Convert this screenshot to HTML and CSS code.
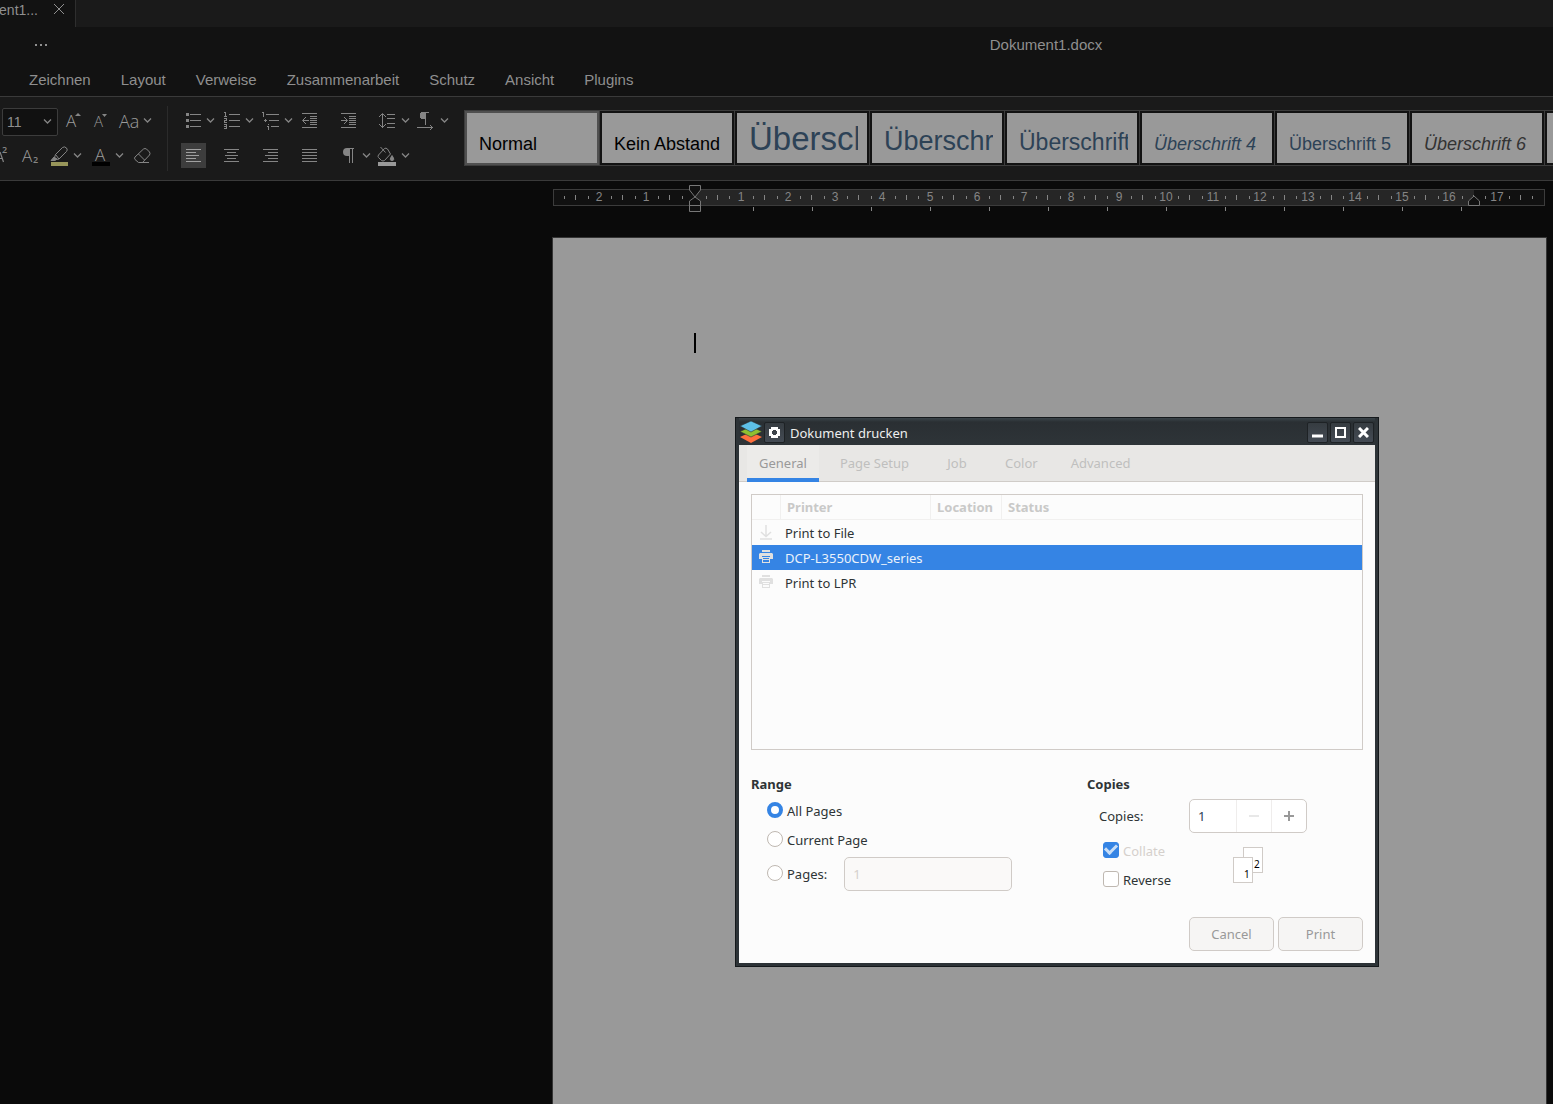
FILE: index.html
```html
<!DOCTYPE html>
<html lang="de">
<head>
<meta charset="utf-8">
<title>Dokument1.docx</title>
<link rel="stylesheet" href="styles.css">
</head>
<body>
<svg class="defs" width="0" height="0" aria-hidden="true">
  <symbol id="chev" viewBox="0 0 14 25"><path d="M1 10.500l3.500 3.500L8 10.500" fill="none" stroke="currentColor" stroke-width="1.300"/></symbol>
  <symbol id="pilcrow" viewBox="0 0 12 16"><path d="M5 0h7v1h-1v14h-1V1H8v14H7V8H5a4 4 0 0 1 0-8z" fill="currentColor"/></symbol>
  <symbol id="printer" viewBox="0 0 14 14"><path fill="currentColor" fill-rule="evenodd" d="M3 0h8v2H3zM1 3h12l1 1v5h-3V6H3v3H0V4zM3 7h8v6H3zM4 8v1h6V8zM4 10v2h6v-2z"/></symbol>
</svg>

<header class="tabbar">
  <div class="doc-tab">
    <span>ent1...</span>
    <button class="icon-btn tab-close" aria-label="Schließen"><svg width="12" height="12" viewBox="0 0 12 12"><path d="M1 1l10 10M11 1L1 11" stroke="currentColor" fill="none"/></svg></button>
  </div>
</header>

<div class="titlebar">
  <button class="icon-btn more" aria-label="Mehr"><svg width="14" height="4" viewBox="0 0 14 4"><path d="M1 1h2v2H1zM6 1h2v2H6zM11 1h2v2h-2z" fill="currentColor"/></svg></button>
  <div class="doc-title">Dokument1.docx</div>
</div>

<nav class="menu">
  <a href="#">Zeichnen</a><a href="#">Layout</a><a href="#">Verweise</a><a href="#">Zusammenarbeit</a><a href="#">Schutz</a><a href="#">Ansicht</a><a href="#">Plugins</a>
</nav>

<div class="toolbar">
  <div class="group font-group">
    <div class="row">
      <div class="size-box">
        <select aria-label="Schriftgrad"><option>11</option></select>
        <svg width="14" height="25"><use href="#chev"/></svg>
      </div>
      <button class="tool wide" aria-label="Schrift vergrößern"><svg width="28" height="25"><text x="7" y="19" font-size="17">A</text><path d="M16 8l3-3 3 3z" fill="currentColor"/></svg></button>
      <button class="tool wide" aria-label="Schrift verkleinern"><svg width="28" height="25"><text x="7" y="19" font-size="15">A</text><path d="M15 6h5l-2.500 3z" fill="currentColor"/></svg></button>
      <button class="tool wide" aria-label="Groß-/Kleinschreibung"><svg width="28" height="25"><text x="4" y="20" font-size="18">Aa</text></svg></button>
      <button class="arrow" aria-label="Optionen"><svg width="14" height="25"><use href="#chev"/></svg></button>
    </div>
    <div class="row">
      <button class="tool" aria-label="Hochgestellt"><svg width="17" height="25"><path d="M0 9l3.500 10M0 15.500h2" fill="none" stroke="currentColor" stroke-width="1.200"/><text class="digit" x="2" y="10" font-size="9">2</text></svg></button>
      <button class="tool wide" aria-label="Tiefgestellt"><svg width="28" height="25"><text x="5" y="19" font-size="17">A</text><text class="digit" x="16" y="20" font-size="9">2</text></svg></button>
      <button class="tool wide" aria-label="Hervorhebung"><svg width="28" height="25" fill="none" stroke="currentColor"><path d="M10.500 11.500l7-7q2-1.500 4 .500 1.500 2 0 3.500l-7.500 7.500zM10.500 11.500l-1 3 2 2 2.500-.500"/><path d="M9 14l-3 3.500h4l2-1.500z" fill="currentColor"/><path d="M6 21h17" stroke="#98965a" stroke-width="4"/></svg></button>
      <button class="arrow" aria-label="Optionen"><svg width="14" height="25"><use href="#chev"/></svg></button>
      <button class="tool wide" aria-label="Schriftfarbe"><svg width="28" height="25"><text x="8" y="18" font-size="17">A</text><path d="M5 21h18" stroke="#000" stroke-width="4"/></svg></button>
      <button class="arrow" aria-label="Optionen"><svg width="14" height="25"><use href="#chev"/></svg></button>
      <button class="tool wide" aria-label="Formatierung löschen"><svg width="28" height="25" fill="none" stroke="currentColor"><path d="M6 14l8.500-8q1.500-1 3 0l3 3q1 1.500 0 3l-7 7.500h-4L6 16.500q-1-1.500 0-2.500zM9.500 11l6 6M10 19.500h10"/></svg></button>
    </div>
  </div>

  <div class="group para-group">
    <div class="row">
      <div class="cell"><button class="tool" aria-label="Aufzählung"><svg width="25" height="25" class="crisp"><path d="M9 6.500h11M9 12.500h11M9 18.500h11"/><path d="M5 6.500h3M5 12.500h3M5 18.500h3" stroke-width="3"/></svg></button><button class="arrow" aria-label="Optionen"><svg width="14" height="25"><use href="#chev"/></svg></button></div>
      <div class="cell"><button class="tool" aria-label="Nummerierung"><svg width="25" height="25" class="crisp"><path d="M9 6.500h11M9 12.500h11M9 18.500h11M4 4.500h2M5.500 4v4M4 8.500h3M4 10.500h3M6.500 10v2M4 12.500h3M4.500 12v2M4 14.500h3M4 16.500h3M6.500 16v5M4 18.500h3M4 20.500h3"/></svg></button><button class="arrow" aria-label="Optionen"><svg width="14" height="25"><use href="#chev"/></svg></button></div>
      <div class="cell"><button class="tool" aria-label="Mehrstufige Liste"><svg width="25" height="25" class="crisp"><path d="M7 6.500h13M10 12.500h10M12 18.500h8M3 4.500h2M4.500 4v5M9.500 16v1M9.500 18v4M8 18.500h1"/><path d="M5 12.500h3M6.500 11v3"/></svg></button><button class="arrow" aria-label="Optionen"><svg width="14" height="25"><use href="#chev"/></svg></button></div>
      <div class="cell"><button class="tool" aria-label="Einzug verkleinern"><svg width="25" height="25" class="crisp"><path d="M4 5.500h15M12 8.500h7M12 10.500h7M12 12.500h7M12 14.500h7M12 16.500h7M4 19.500h15M5 12.500h6"/><path class="smooth" d="M8 9l-3.500 3.500L8 16"/></svg></button></div>
      <div class="cell"><button class="tool" aria-label="Einzug vergrößern"><svg width="25" height="25" class="crisp"><path d="M4 5.500h15M12 8.500h7M12 10.500h7M12 12.500h7M12 14.500h7M12 16.500h7M4 19.500h15M4 12.500h6"/><path class="smooth" d="M7 9l3.500 3.500L7 16"/></svg></button></div>
      <div class="cell"><button class="tool" aria-label="Zeilenabstand"><svg width="25" height="25" class="crisp"><path d="M11 6.500h8M11 10.500h8M11 15.500h8M11 19.500h8M6.500 6v14"/><path class="smooth" d="M3 9l3.500-3.500L10 9M3 16l3.500 3.500L10 16"/></svg></button><button class="arrow" aria-label="Optionen"><svg width="14" height="25"><use href="#chev"/></svg></button></div>
      <div class="cell"><button class="tool" aria-label="Textrichtung"><svg width="25" height="25" class="crisp"><use href="#pilcrow" x="3" y="4" width="12" height="14"/><path d="M2 19.500h16"/><path class="smooth" d="M15 17l2.500 2.500L15 22"/></svg></button><button class="arrow" aria-label="Optionen"><svg width="14" height="25"><use href="#chev"/></svg></button></div>
    </div>
    <div class="row">
      <div class="cell"><button class="tool active" aria-label="Linksbündig"><svg width="25" height="25" class="crisp"><path d="M5 6.500h15M5 9.500h10M5 12.500h13M5 15.500h10M5 18.500h15"/></svg></button></div>
      <div class="cell"><button class="tool" aria-label="Zentriert"><svg width="25" height="25" class="crisp"><path d="M4 6.500h15M7 9.500h9M5 12.500h13M7 15.500h9M4 18.500h15"/></svg></button></div>
      <div class="cell"><button class="tool" aria-label="Rechtsbündig"><svg width="25" height="25" class="crisp"><path d="M4 6.500h15M9 9.500h10M6 12.500h13M9 15.500h10M4 18.500h15"/></svg></button></div>
      <div class="cell"><button class="tool" aria-label="Blocksatz"><svg width="25" height="25" class="crisp"><path d="M4 6.500h15M4 9.500h15M4 12.500h15M4 15.500h15M4 18.500h15"/></svg></button></div>
      <div class="cell"><button class="tool" aria-label="Formatierungszeichen"><svg width="25" height="25"><use href="#pilcrow" x="5" y="5" width="12" height="16"/></svg></button><button class="arrow" aria-label="Optionen"><svg width="14" height="25"><use href="#chev"/></svg></button></div>
      <div class="cell"><button class="tool" aria-label="Schattierung"><svg width="25" height="25" fill="none" stroke="currentColor"><path d="M8.500 5.500L2.500 12q-1 1.500 0 2.500l3 3q1.500 1 3 0l6-6.500-3-5q-1.500-1.500-3-.500zM4.500 4l5 5.500"/><path d="M16 12.500q3.500 5 0 5t0-5z" fill="currentColor"/><path d="M2 21h18" stroke="#999" stroke-width="4"/></svg></button><button class="arrow" aria-label="Optionen"><svg width="14" height="25"><use href="#chev"/></svg></button></div>
    </div>
  </div>

  <div class="gallery">
    <button class="style selected"><span class="clip"><span>Normal</span></span></button>
    <button class="style"><span class="clip"><span>Kein Abstand</span></span></button>
    <button class="style heading"><span class="clip"><span class="h1">Übersch</span></span></button>
    <button class="style heading"><span class="clip"><span class="h2">Überschr</span></span></button>
    <button class="style heading"><span class="clip"><span class="h3">Überschrift</span></span></button>
    <button class="style heading"><span class="clip"><span class="italic">Überschrift 4</span></span></button>
    <button class="style heading"><span class="clip"><span>Überschrift 5</span></span></button>
    <button class="style h6"><span class="clip"><span class="italic">Überschrift 6</span></span></button>
    <button class="style" aria-label="Überschrift 7"><span class="clip"></span></button>
  </div>
</div>

<main class="editor">
  <div class="sheet-column">
    <svg class="ruler" width="995" height="29" viewBox="0 0 995 29" aria-label="Lineal">
      <rect x="1.500" y="5.500" width="991" height="16" fill="#111" stroke="#3c3c3c"/>
      <rect x="143" y="6" width="779" height="15" fill="#262626"/>
      <g stroke="#858585" shape-rendering="crispEdges">
        <line x1="12" x2="984" y1="13.500" y2="13.500" stroke-width="3" stroke-dasharray="1 22.620"/>
        <line x1="23" x2="984" y1="13.500" y2="13.500" stroke-width="5" stroke-dasharray="1 46.240"/>
        <line x1="201" x2="912" y1="25" y2="25" stroke-width="4" stroke-dasharray="1 58.020"/>
      </g>
      <g class="ruler-num">
        <text x="47" y="17">2</text><text x="94" y="17">1</text>
        <text x="189" y="17">1</text><text x="236" y="17">2</text><text x="283" y="17">3</text><text x="330" y="17">4</text><text x="378" y="17">5</text><text x="425" y="17">6</text><text x="472" y="17">7</text><text x="519" y="17">8</text><text x="567" y="17">9</text><text x="614" y="17">10</text><text x="661" y="17">11</text><text x="708" y="17">12</text><text x="756" y="17">13</text><text x="803" y="17">14</text><text x="850" y="17">15</text><text x="897" y="17">16</text><text x="945" y="17">17</text>
      </g>
      <g fill="#111" stroke="#777">
        <path d="M137.500 1.500h11V6l-5.500 7-5.500-7zM137.500 27.500V17l5.500-4 5.500 4v10.500zM137.500 21.500h11"/>
        <path d="M916.500 21.500V17l5.500-5 5.500 5v4.500z"/>
      </g>
    </svg>
    <div class="sheet"><span class="caret"></span></div>
  </div>
</main>

<section class="dialog" role="dialog" aria-labelledby="dlg-title">
  <div class="dlg-bar">
    <svg class="logo" width="24" height="24" viewBox="0 0 24 24"><path d="M1 17l11-5 11 5-11 6z" fill="#ff6f3d"/><path d="M1 11.500l11-5 11 5-11 5.500z" fill="#8fc031" stroke="#2c3135" stroke-width=".6"/><path d="M1 6l11-5 11 5-11 6z" fill="#5dc0e8" stroke="#2c3135" stroke-width=".6"/></svg>
    <button class="win-btn" aria-label="Fenstermenü"><svg width="11" height="11" viewBox="0 0 11 11"><path fill="#fff" fill-rule="evenodd" d="M2 0h7v2h2v7H9v2H2V9H0V2h2zM4 3v1H3v3h1v1h3V7h1V4H7V3z"/></svg></button>
    <h1 id="dlg-title">Dokument drucken</h1>
    <button class="win-btn" aria-label="Minimieren"><svg width="11" height="11"><path d="M0 9h11" stroke="#fff" stroke-width="3"/></svg></button>
    <button class="win-btn" aria-label="Maximieren"><svg width="11" height="11"><path d="M1 1h9v9H1z" fill="none" stroke="#fff" stroke-width="2"/></svg></button>
    <button class="win-btn" aria-label="Schließen"><svg width="11" height="11"><path d="M1 1l9 9M10 1l-9 9" stroke="#fff" stroke-width="3"/></svg></button>
  </div>
  <div class="dlg-content">
    <div class="tabs" role="tablist">
      <button role="tab" class="current">General</button><button role="tab">Page Setup</button><button role="tab" class="short">Job</button><button role="tab">Color</button><button role="tab">Advanced</button>
    </div>
    <div class="dlg-body">
      <div class="list">
        <table>
          <colgroup><col class="c-icon"><col class="c-name"><col class="c-loc"><col></colgroup>
          <thead><tr><th></th><th>Printer</th><th>Location</th><th>Status</th></tr></thead>
          <tbody>
            <tr><td><svg width="14" height="16" viewBox="0 0 14 16"><path d="M7 0v11M2 7l5 4.500L12 7M1 14h12" fill="none" stroke="currentColor" stroke-width="1.500"/></svg></td><td>Print to File</td><td></td><td></td></tr>
            <tr class="picked"><td><svg width="14" height="16"><use href="#printer" width="14" height="14"/></svg></td><td>DCP-L3550CDW_series</td><td></td><td></td></tr>
            <tr><td><svg width="14" height="16"><use href="#printer" width="14" height="14"/></svg></td><td>Print to LPR</td><td></td><td></td></tr>
          </tbody>
        </table>
      </div>
      <div class="options">
        <div class="range">
          <h2>Range</h2>
          <label class="opt"><input type="radio" name="range" checked>All Pages</label>
          <label class="opt"><input type="radio" name="range">Current Page</label>
          <div class="pages"><label class="opt"><input type="radio" name="range">Pages:</label><input type="text" class="entry" value="1" aria-label="Pages" disabled></div>
        </div>
        <div class="copies">
          <h2>Copies</h2>
          <div class="copy-grid">
            <label for="copies">Copies:</label>
            <div class="spin"><input id="copies" type="text" inputmode="numeric" value="1"><button disabled aria-label="Weniger"><svg width="10" height="10"><path d="M0 5h10" stroke="currentColor" stroke-width="2"/></svg></button><button aria-label="Mehr"><svg width="10" height="10"><path d="M0 5h10M5 0v10" stroke="currentColor" stroke-width="2"/></svg></button></div>
            <div class="checks">
              <label class="opt off"><input type="checkbox" checked disabled>Collate</label>
              <label class="opt"><input type="checkbox">Reverse</label>
            </div>
            <svg class="collate" width="30" height="36" viewBox="0 0 30 36"><rect x="10.500" y=".5" width="19" height="25"/><text x="21" y="21">2</text><rect x=".5" y="10.500" width="19" height="25"/><text x="11" y="31">1</text></svg>
          </div>
        </div>
      </div>
      <div class="actions"><button>Cancel</button><button>Print</button></div>
    </div>
  </div>
</section>
</body>
</html>
```
FILE: styles.css
```css
* { box-sizing: border-box; }
html, body { height: 100%; }
body {
  margin: 0;
  display: flex;
  flex-direction: column;
  overflow: hidden;
  position: relative;
  background: #0a0a0a;
  color: #8f8f8f;
  font: 15px/18px "Liberation Sans", Arial, sans-serif;
}
button { margin: 0; padding: 0; border: 0; background: none; color: inherit; font: inherit; }
svg { display: block; flex: none; }
.defs { position: absolute; }

.tabbar { flex: none; display: flex; height: 27px; background: #1a1a1a; }
.doc-tab {
  display: flex;
  align-items: flex-start;
  gap: 15px;
  width: 76px;
  border-right: 1px solid #2e2e2e;
  background: #121212;
  font-size: 14px;
}
.doc-tab span { width: 38px; line-height: 20px; white-space: nowrap; display: flex; justify-content: flex-end; }
.tab-close { padding-top: 3px; }

.titlebar { flex: none; display: flex; align-items: center; height: 35px; background: #121212; padding-left: 34px; }
.more { width: 14px; }
.doc-title { flex: 1; padding-left: 491px; text-align: center; }

.menu { flex: none; display: flex; gap: 30px; height: 35px; padding: 9px 29px 0; background: #121212; border-bottom: 1px solid #3a3a3a; }
.menu a { color: inherit; text-decoration: none; }

.toolbar { flex: none; display: flex; height: 84px; background: #1a1a1a; border-bottom: 1px solid #3a3a3a; }
.group { flex: none; display: flex; flex-direction: column; gap: 10px; padding-top: 11px; color: #858585; }
.font-group { width: 167px; }
.para-group { width: 297px; padding-left: 14px; position: relative; }
.para-group::before { content: ""; position: absolute; left: 0; top: 9px; bottom: 9px; border-left: 1px solid #2b2b2b; }
.row { display: flex; height: 25px; }
.cell { display: flex; width: 39px; }
.tool { height: 25px; }
.tool.active { background: #3d3d3d; color: #a0a0a0; }
.tool text { font-family: "Open Sans", sans-serif; font-weight: 300; fill: #9c9c9c; }
.tool .digit { font-weight: 600; fill: #858585; }
.crisp { fill: none; stroke: currentColor; shape-rendering: crispEdges; }
.crisp use { stroke: none; }
.smooth { shape-rendering: auto; }
.size-box { display: flex; width: 56px; height: 28px; margin: 0 1px 0 2px; border: 1px solid #3c3c3c; border-radius: 2px; background: #111; }
.size-box select { width: 41px; padding: 0 4px; border: 0; appearance: none; background: none; color: #8f8f8f; font: 14px "Liberation Sans", Arial, sans-serif; }

.gallery { flex: 1; min-width: 0; display: flex; gap: 1px; height: 56px; margin-top: 13px; padding: 1px 0 1px 1px; background: #3c3c3c; overflow: hidden; }
.style { flex: none; width: 134px; height: 54px; border: 2px solid #121212; padding: 0 9px 0 12px; background: #999; color: #000; font-size: 18px; text-align: left; }
.style.selected { border-color: #505050; }
.clip { display: block; height: 50px; overflow: hidden; line-height: 62px; white-space: nowrap; }
.clip span { line-height: 0; }
.heading { color: #2d4256; }
.h6 { color: #333; }
.clip .h1 { font-size: 33px; }
.clip .h2 { font-size: 27px; }
.clip .h3 { font-size: 23px; }
.clip .italic { font-style: italic; }

.editor { flex: 1; display: flex; justify-content: flex-end; padding: 3px 6px 0 0; }
.sheet-column { flex: none; display: flex; flex-direction: column; gap: 24px; width: 995px; }
.ruler-num { fill: #858585; font: 12px "Liberation Sans", Arial, sans-serif; text-anchor: middle; }
.sheet { flex: 1; padding: 95px 141px 0; background: #999; border: 1px solid #353535; border-bottom: 0; }
.caret { display: block; width: 2px; height: 20px; background: #000; }

.dialog {
  position: absolute;
  left: 735px;
  top: 417px;
  width: 644px;
  padding: 0 3px 3px;
  border: 1px solid #15191c;
  background: #2d3337;
  color: #2e3436;
  font: 13px/18px "Noto Sans", sans-serif;
}
.dlg-bar { display: flex; align-items: center; gap: 2px; height: 27px; padding: 2px 1px 1px 0; background: linear-gradient(#3c454b, #2a2f33 4px, #2e3438); }
.logo { margin-right: -1px; }
.dlg-bar h1 { flex: 1; margin: 0; padding: 1px 0 0 3px; color: #eee; font-size: 13px; font-weight: 400; }
.win-btn { display: grid; place-items: center; width: 21px; height: 21px; border: 1px solid #1e2225; border-radius: 2px; background: linear-gradient(#363c41, #444b54); }
.dlg-content { background: #fcfcfc; }
.tabs { display: flex; gap: 9px; height: 37px; padding-left: 8px; background: #e8e7e5; border-bottom: 1px solid #d0ccc8; }
.tabs button { height: 37px; padding: 2px 12px 0; border-bottom: 4px solid transparent; color: #bfbfbe; }
.tabs .short { min-width: 54px; }
.tabs .current { background: #ecebe9; color: #999; border-color: #3584e4; }
.dlg-body { padding: 12px; }
.list { height: 256px; border: 1px solid #d0cbc7; }
table { width: 100%; table-layout: fixed; border-collapse: separate; border-spacing: 0; }
.c-icon { width: 29px; }
.c-name { width: 150px; }
.c-loc { width: 71px; }
th { height: 25px; padding: 0 6px; border-right: 1px solid #f1f0ef; border-bottom: 1px solid #f1f0ef; color: #c9c9c8; text-align: left; line-height: 18px; }
th:last-child { border-right: 0; }
td { height: 25px; padding: 1px 0 0 4px; white-space: nowrap; line-height: 18px; }
td:first-child { padding: 0 0 0 7px; color: #e0e0e0; }
.picked { background: #3584e4; color: #ebf2fb; }

.options { display: grid; grid-template-columns: 336px 1fr; margin-top: 24px; }
h2 { margin: 0; font-size: 13px; line-height: 20px; font-weight: 700; }
.range .opt { margin-left: 16px; }
.range h2 { margin-bottom: 2px; }
.opt { display: flex; align-items: center; gap: 4px; height: 29px; }
.opt input { flex: none; appearance: none; width: 16px; height: 16px; margin: 0 0 2px; border: 1px solid #bfb8b1; background: #fff; }
.opt input[type="radio"] { border-radius: 50%; }
.opt input[type="radio"]:checked { border: 4px solid #3584e4; }
.opt input[type="checkbox"] { border-radius: 3px; }
.opt input[type="checkbox"]:checked { display: grid; place-items: center; border-color: #3584e4; background: #3584e4; }
.opt input[type="checkbox"]:checked::before { content: ""; width: 9px; height: 5px; margin-bottom: 3px; border: solid #c9def7; border-width: 0 0 3px 3px; transform: rotate(-45deg); }
.off { color: #d5d0cc; }
.pages { display: flex; align-items: center; gap: 17px; margin-top: 3px; }
.entry { width: 168px; height: 34px; padding: 0 8px; border: 1px solid #d0cbc7; border-radius: 5px; background: #faf9f8; color: #d5d0cc; font: inherit; }
.copy-grid { display: grid; grid-template-columns: 90px 1fr; row-gap: 3px; align-items: center; padding: 5px 0 0 12px; }
.spin { display: flex; width: 118px; height: 34px; border: 1px solid #d0cbc7; border-radius: 5px; background: #fff; overflow: hidden; }
.spin input { flex: 1; min-width: 0; padding: 0 8px; border: 0; background: none; color: #2c4257; font: inherit; }
.spin button { display: grid; place-items: center; width: 35px; border-left: 1px solid #efedec; color: #999; }
.spin button:disabled { color: #e8e8e8; }
.checks { padding-left: 4px; }
.collate { margin-left: 44px; }
.collate rect { fill: #fff; stroke: #d0cbc7; }
.collate text { fill: #000; font: 10px "Noto Sans", sans-serif; }
.actions { display: flex; justify-content: flex-end; gap: 4px; margin-top: 23px; }
.actions button { width: 85px; height: 34px; border: 1px solid #d0cbc7; border-radius: 5px; background: #f6f5f4; color: #999; }
```
